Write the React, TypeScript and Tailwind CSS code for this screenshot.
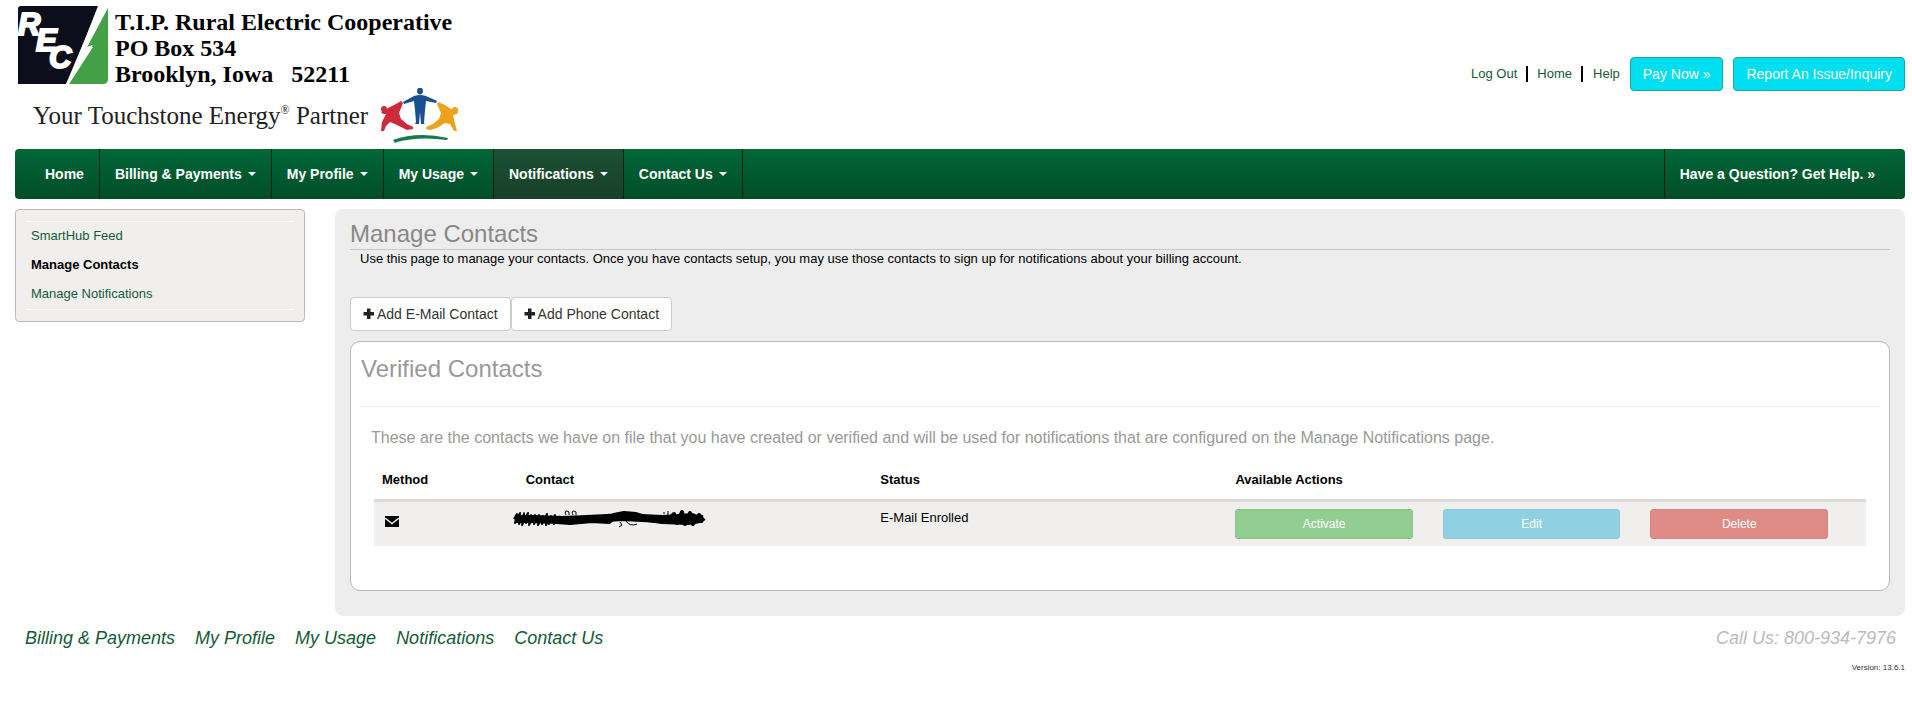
import { useState } from 'react';

interface NavItem {
  label: string;
  menu: boolean;
}

const NAV_ITEMS: NavItem[] = [
  { label: 'Home', menu: false },
  { label: 'Billing & Payments', menu: true },
  { label: 'My Profile', menu: true },
  { label: 'My Usage', menu: true },
  { label: 'Notifications', menu: true },
  { label: 'Contact Us', menu: true },
];

const SIDE_LINKS = ['SmartHub Feed', 'Manage Contacts', 'Manage Notifications'];
const FOOTER_LINKS = ['Billing & Payments', 'My Profile', 'My Usage', 'Notifications', 'Contact Us'];

function RecLogo() {
  return (
    <svg width="90" height="78" viewBox="0 0 90 78" role="img" aria-label="REC">
      <path d="M3 0H81L48 78H0V3Q0 0 3 0Z" fill="#0c0e1c" />
      <path d="M90 2V73Q90 78 85 78H51L75 41L69 41Z" fill="#43a047" />
      <path d="M80 0H90L69 41L75 39L51 78H48L66 47L60 51Z" fill="#fff" />
      <text
        x="0 18 31"
        y="29 45 62"
        fill="#fff"
        stroke="#fff"
        strokeWidth="2"
        fontFamily="'Liberation Sans', Arial, sans-serif"
        fontWeight="700"
        fontStyle="italic"
        fontSize="31"
      >
        REC
      </text>
    </svg>
  );
}

function TouchstoneFigures() {
  return (
    <svg width="80" height="56" viewBox="0 0 80 56" aria-hidden="true">
      <g fill="#1b4f93">
        <ellipse cx="41" cy="3" rx="3" ry="3.4" />
        <path d="M24 14L35 8Q41 6 47 8L58 13L57 15L47 13L46 22L45 35L46 36H42L41 24L40 36H36L37 34L36 22L35 13L25 16Z" />
      </g>
      <g fill="#cf2a3c">
        <circle cx="5" cy="21" r="3" />
        <path d="M22 13L24 15L20 25L22 31L28 36L34 39L34 41L28 42L18 37L11 34L7 38L5 43L2 43L3 34L7 26L4 26L2 24L11 19L17 16Z" />
      </g>
      <g fill="#eba31c">
        <circle cx="76" cy="22" r="3" />
        <path d="M59 14L66 17L72 21L79 24L78 26L74 27L76 36L78 43L75 43L71 36L66 35L58 40L51 42L47 41L47 39L54 36L60 31L62 25L58 16Z" />
      </g>
      <path d="M14 52Q38 43 69 50L68 52Q40 48 18 54L16 55Z" fill="#157a50" />
    </svg>
  );
}

function PlusIcon() {
  return (
    <svg width="12" height="12" viewBox="0 0 12 12" className="mr-0.5" aria-hidden="true">
      <path d="M4 0.5H7.5V4H11V7.5H7.5V11H4V7.5H0.5V4H4Z" fill="#222" />
    </svg>
  );
}

// Marker strokes hiding the address
function RedactedAddress() {
  return (
    <svg width="194" height="18" viewBox="0 0 194 18" className="-ml-3.5 block" role="img" aria-label="Hidden e-mail address">
      <g fill="none" stroke="#000" strokeLinejoin="round">
        <path d="M2 9L5 4L3 13L8 3L7 14L12 4L10 15L16 3L14 13L19 5L17 15L23 5L22 14L27 5L26 15L31 6L30 14L35 4L34 15L39 6L37 14L43 5L42 14L48 6" strokeWidth="2" />
        <path d="M3 9L20 9L50 10L75 9L95 8L110 7L130 8L150 9L170 8L191 9" strokeWidth="8" />
        <path d="M45 11L58 12L80 10L97 11L102 6L112 4L124 5L136 9L150 11L168 7L180 6L188 10L176 12L150 11" strokeWidth="6" />
        <path d="M155 11L162 4L165 13L170 2L173 14L178 3L181 14L187 5L192 11" strokeWidth="4" />
        <path d="M12 8V2M54 5Q52 1 55 1Q58 1 57 5M61 5Q59 1 62 1Q65 1 64 5M108 12L110 15L107 17M114 11Q118 17 125 14M152 2V4M156 1V6" strokeWidth="1" />
      </g>
    </svg>
  );
}

export default function App() {
  const [active, setActive] = useState('Notifications');

  return (
    <div className="bg-white pl-[15px] pr-[7px] font-['Liberation_Sans',Arial,sans-serif] text-[13px] leading-5 text-black">
      <header className="flex h-[149px] justify-between">
        <div className="pl-[3px] pt-1.5 font-['Liberation_Serif','Times_New_Roman',serif]">
          <div className="flex h-[78px] gap-[7px]">
            <RecLogo />
            <p className="whitespace-pre pt-[3px] text-2xl font-bold leading-[26px]">
              {'T.I.P. Rural Electric Cooperative\nPO Box 534\nBrooklyn, Iowa   52211'}
            </p>
          </div>
          <div className="flex pl-[15px] pt-1">
            <p className="w-[346px] whitespace-nowrap pt-3 text-[25px] leading-8 text-[#222]">
              Your Touchstone Energy<sup className="-top-2.5 text-xs leading-none">®</sup> Partner
            </p>
            <TouchstoneFigures />
          </div>
        </div>
        <div className="flex items-center self-start pt-[57px] text-[#145a38]">
          <a href="#logout" className="border-r-2 border-black pr-[9px] leading-4">Log Out</a>
          <a href="#home" className="border-r-2 border-black px-[9px] leading-4">Home</a>
          <a href="#help" className="px-[10px] leading-4">Help</a>
          <button className="h-[34px] rounded border border-[#1ba3ae] bg-[#00dfef] px-3 text-sm text-white">Pay Now »</button>
          <button className="ml-2.5 h-[34px] rounded border border-[#1ba3ae] bg-[#00dfef] px-3 text-sm text-white">Report An Issue/Inquiry</button>
        </div>
      </header>

      <nav className="flex h-[50px] overflow-hidden rounded bg-linear-to-b from-[#006837] to-[#004d28] pl-[15px] text-sm font-bold text-white">
        {NAV_ITEMS.map((item) => (
          <button
            key={item.label}
            onClick={() => setActive(item.label)}
            className={`flex items-center border-r border-[#06200f] px-[15px] ${
              active === item.label ? 'bg-linear-to-b from-[#1b5135] to-[#174029]' : ''
            }`}
          >
            {item.label}
            {item.menu && <span className="ml-1.5 border-x-4 border-t-4 border-x-transparent border-t-white" />}
          </button>
        ))}
        <a href="#help" className="ml-auto flex items-center border-l border-[#06200f] pl-[15px] pr-[30px]">Have a Question? Get Help. »</a>
      </nav>

      <div className="mt-2.5 flex items-start gap-[30px]">
        <aside className="w-[290px] shrink-0 rounded-sm border border-[#bbb] bg-[#f0efee] px-2.5 py-[11px]">
          <ul className="border-y border-white px-[5px] text-[#145a38]">
            {SIDE_LINKS.map((link) => (
              <li key={link} className="pb-[5px] pt-1">
                <a href="#contacts" className={link === 'Manage Contacts' ? 'font-bold text-black' : ''}>{link}</a>
              </li>
            ))}
          </ul>
        </aside>

        <main className="grow rounded-lg bg-[#ededed] px-[15px] pb-[25px] pt-2">
          <h1 className="border-b border-[#c8c8c8] pt-px text-2xl leading-[31px] text-[#888]">Manage Contacts</h1>
          <p className="pl-2.5 leading-[18px]">
            Use this page to manage your contacts. Once you have contacts setup, you may use those contacts to sign up for notifications about your billing account.
          </p>
          <div className="flex pt-[29px] text-sm text-[#333]">
            <button className="flex h-[34px] items-center rounded border border-[#ccc] bg-white px-3"><PlusIcon />Add E-Mail Contact</button>
            <button className="flex h-[34px] items-center rounded border border-[#ccc] bg-white px-3"><PlusIcon />Add Phone Contact</button>
          </div>

          <section className="mt-2.5 rounded-[10px] border border-[#b8b8b8] bg-white px-2.5 pb-11 pt-[11px]">
            <h2 className="border-b border-[#eee] pb-[21px] text-2xl leading-8 text-[#999]">Verified Contacts</h2>
            <p className="px-2.5 pt-5 text-base leading-[22px] text-[#999]">
              These are the contacts we have on file that you have created or verified and will be used for notifications that are configured on the Manage Notifications page.
            </p>
            <div className="px-[13px] pt-[21px]">
              <table className="w-full table-fixed text-left">
                <thead>
                  <tr className="h-[30px] border-b-[3px] border-[#dddbda] align-top">
                    <th className="w-[9.5%] px-2">Method</th>
                    <th className="w-[23.9%] px-2.5">Contact</th>
                    <th className="w-[23.8%] px-2">Status</th>
                    <th className="px-2">Available Actions</th>
                  </tr>
                </thead>
                <tbody>
                  <tr className="h-[46px] bg-[#f0efee] align-top">
                    <td className="px-[11px] pt-3.5">
                      <svg width="14" height="11" viewBox="0 0 14 11" role="img" aria-label="E-mail">
                        <path d="M0 0H14V11H0Z" fill="#000" />
                        <path d="M0 2L7 7.5L14 2" fill="none" stroke="#f0efee" strokeWidth="1.5" />
                      </svg>
                    </td>
                    <td className="px-2.5 pt-2"><RedactedAddress /></td>
                    <td className="px-2 pt-1.5">E-Mail Enrolled</td>
                    <td className="px-2 pt-[7px]">
                      <div className="grid grid-cols-3 gap-[30px] pr-[30px] text-xs text-white">
                        <button className="h-[30px] rounded-[3px] border border-[#88c088] bg-[#92cd92]">Activate</button>
                        <button className="h-[30px] rounded-[3px] border border-[#8ac6d8] bg-[#90d0e3]">Edit</button>
                        <button className="h-[30px] rounded-[3px] border border-[#d68480] bg-[#df8b86]">Delete</button>
                      </div>
                    </td>
                  </tr>
                </tbody>
              </table>
            </div>
          </section>
        </main>
      </div>

      <footer>
        <div className="flex justify-between pl-2.5 pr-[9px] pt-2.5 text-lg italic leading-6">
          <div className="flex gap-5 text-[#145a38]">
            {FOOTER_LINKS.map((link) => (
              <a key={link} href="#section">{link}</a>
            ))}
          </div>
          <span className="text-[#bbb]">Call Us: 800-934-7976</span>
        </div>
        <p className="pt-2 text-right text-[8px] text-[#333]">Version: 13.6.1</p>
      </footer>
    </div>
  );
}
